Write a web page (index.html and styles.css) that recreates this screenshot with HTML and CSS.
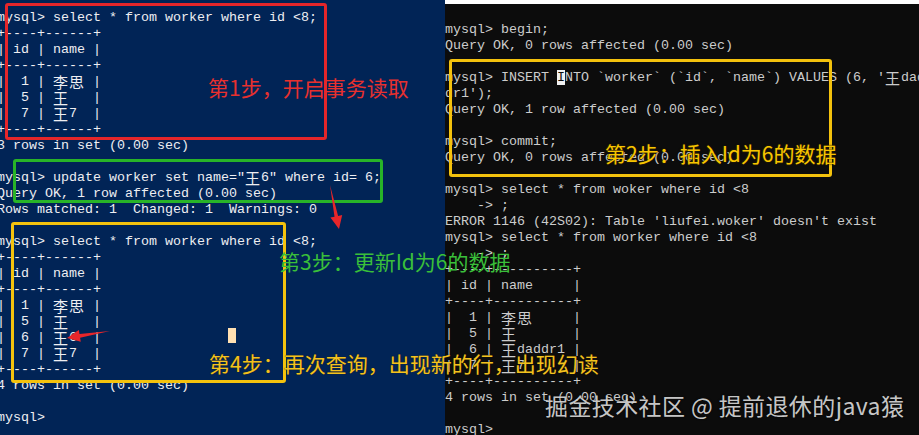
FILE: index.html
```
<!DOCTYPE html>
<html lang="zh-CN">
<head>
<meta charset="utf-8">
<title>MySQL 幻读演示</title>
<link rel="stylesheet" href="styles.css">
</head>
<body>
<div class="page">
  <section class="term term-left">
    <div class="ln">mysql&gt; select * from worker where id &lt;8;</div>
    <div class="ln">+----+------+</div>
    <div class="ln">| id | name |</div>
    <div class="ln">+----+------+</div>
    <div class="ln">|  1 | <span class="w">李思</span> |</div>
    <div class="ln">|  5 | <span class="w">王</span>   |</div>
    <div class="ln">|  7 | <span class="w">王</span>7  |</div>
    <div class="ln">+----+------+</div>
    <div class="ln">3 rows in set (0.00 sec)</div>
    <div class="ln"> </div>
    <div class="ln">mysql&gt; update worker set name="<span class="w">王</span>6" where id= 6;</div>
    <div class="ln">Query OK, 1 row affected (0.00 sec)</div>
    <div class="ln">Rows matched: 1  Changed: 1  Warnings: 0</div>
    <div class="ln"> </div>
    <div class="ln">mysql&gt; select * from worker where id &lt;8;</div>
    <div class="ln">+----+------+</div>
    <div class="ln">| id | name |</div>
    <div class="ln">+----+------+</div>
    <div class="ln">|  1 | <span class="w">李思</span> |</div>
    <div class="ln">|  5 | <span class="w">王</span>   |</div>
    <div class="ln">|  6 | <span class="w">王</span>6  |</div>
    <div class="ln">|  7 | <span class="w">王</span>7  |</div>
    <div class="ln">+----+------+</div>
    <div class="ln">4 rows in set (0.00 sec)</div>
    <div class="ln"> </div>
    <div class="ln">mysql&gt;</div>
  </section>
  <section class="term term-right">
    <div class="ln">mysql&gt; begin;</div>
    <div class="ln">Query OK, 0 rows affected (0.00 sec)</div>
    <div class="ln"> </div>
    <div class="ln">mysql&gt; INSERT <span class="cur">I</span>NTO `worker` (`id`, `name`) VALUES (6, '<span class="w">王</span>dad</div>
    <div class="ln">dr1');</div>
    <div class="ln">Query OK, 1 row affected (0.00 sec)</div>
    <div class="ln"> </div>
    <div class="ln">mysql&gt; commit;</div>
    <div class="ln">Query OK, 0 rows affected (0.00 sec)</div>
    <div class="ln"> </div>
    <div class="ln">mysql&gt; select * from woker where id &lt;8</div>
    <div class="ln">    -&gt; ;</div>
    <div class="ln">ERROR 1146 (42S02): Table 'liufei.woker' doesn't exist</div>
    <div class="ln">mysql&gt; select * from worker where id &lt;8</div>
    <div class="ln">    -&gt; ;</div>
    <div class="ln">+----+----------+</div>
    <div class="ln">| id | name     |</div>
    <div class="ln">+----+----------+</div>
    <div class="ln">|  1 | <span class="w">李思</span>     |</div>
    <div class="ln">|  5 | <span class="w">王</span>       |</div>
    <div class="ln">|  6 | <span class="w">王</span>daddr1 |</div>
    <div class="ln">|  7 | <span class="w">王</span>7      |</div>
    <div class="ln">+----+----------+</div>
    <div class="ln">4 rows in set (0.00 sec)</div>
    <div class="ln"> </div>
    <div class="ln">mysql&gt;</div>
  </section>

  <div class="box box-red"></div>
  <div class="box box-green"></div>
  <div class="box box-yellow-l"></div>
  <div class="box box-yellow-r"></div>
  <div class="caret"></div>

  <svg class="arrows" width="919" height="435" viewBox="0 0 919 435">
    <polygon fill="#e8262a" points="330,185 338.1,215.9 342.2,215.1 339,229 330.4,217.5 334.5,216.7"/>
    <polygon fill="#e8262a" points="110,331 80.1,337.7 80.8,341.8 67,338 78.8,330 79.5,334.1"/>
  </svg>

  <div class="label label-red">第1步，开启事务读取</div>
  <div class="label label-green">第3步：更新Id为6的数据</div>
  <div class="label label-yellow-l">第4步：再次查询，出现新的行，出现幻读</div>
  <div class="label label-yellow-r">第2步：插入Id为6的数据</div>
  <div class="watermark">掘金技术社区 @ 提前退休的java猿</div>
</div>
</body>
</html>
```
FILE: styles.css
```
html, body {
  margin: 0;
  padding: 0;
  background: #0c0c0c;
}

.page {
  position: relative;
  width: 919px;
  height: 435px;
  overflow: hidden;
  display: flex;
}

.term {
  font-family: "Liberation Mono", "Noto Sans CJK SC", monospace;
  font-size: 13.33px;
  height: 435px;
  box-sizing: border-box;
  overflow: hidden;
}

.term-left {
  width: 445px;
  flex: none;
  background: #012456;
  color: #eeeef2;
  padding-top: 10px;
  padding-left: 0;
}

.term-left .ln {
  margin-left: -3px;
}

.term-right {
  flex: 1;
  background: #0c0c0c;
  color: #cccccc;
  border-top: 4px solid #ffffff;
  padding-top: 18px;
}

.ln {
  height: 16px;
  line-height: 16px;
  white-space: pre;
}

.w {
  font-family: "Noto Sans CJK SC", sans-serif;
  font-size: 15px;
  line-height: 16px;
  display: inline-block;
  letter-spacing: 1px;
  vertical-align: top;
}

.cur {
  background: #f0f0f0;
  color: #0c0c0c;
}

.box {
  position: absolute;
  box-sizing: border-box;
  border-radius: 3px;
}

.box-red {
  left: 5px;
  top: 3px;
  width: 322px;
  height: 137px;
  border: 3px solid #e5262a;
}

.box-green {
  left: 13px;
  top: 159px;
  width: 370px;
  height: 44px;
  border: 3px solid #28b428;
}

.box-yellow-l {
  left: 11px;
  top: 222px;
  width: 275px;
  height: 161px;
  border: 3px solid #f4c20d;
}

.box-yellow-r {
  left: 449px;
  top: 59px;
  width: 383px;
  height: 118px;
  border: 3px solid #f4c20d;
}

.caret {
  position: absolute;
  left: 228px;
  top: 328px;
  width: 8px;
  height: 15px;
  background: #ffe0b2;
}

.arrows {
  position: absolute;
  left: 0;
  top: 0;
  pointer-events: none;
}

.label {
  position: absolute;
  font-family: "Noto Sans CJK SC", sans-serif;
  font-size: 21px;
  line-height: 21px;
  white-space: nowrap;
}

.label-red {
  left: 208px;
  top: 77px;
  color: #e8302e;
}

.label-green {
  left: 279px;
  top: 251px;
  color: #3abf3a;
}

.label-yellow-l {
  left: 209px;
  top: 353px;
  color: #f3c21f;
  text-shadow: 0 0 1px #3a2a00;
}

.label-yellow-r {
  left: 605px;
  top: 143px;
  color: #f7c600;
  text-shadow: 0 0 2px #3a2a00, 0 0 1px #3a2a00;
}

.watermark {
  position: absolute;
  left: 545px;
  top: 394px;
  font-family: "Noto Sans CJK SC", sans-serif;
  font-size: 23px;
  line-height: 23px;
  letter-spacing: 0.4px;
  color: rgba(225, 225, 225, 0.9);
  text-shadow: 0 0 2px rgba(0, 0, 0, 0.6);
  white-space: nowrap;
}
```
